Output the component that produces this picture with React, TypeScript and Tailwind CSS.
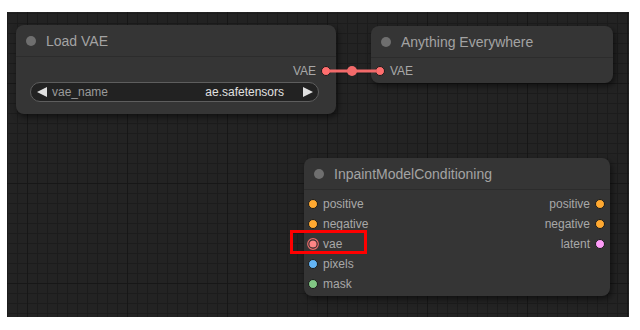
import React from "react";

const Dot = ({ color }: { color: string }) => (
  <span
    className="inline-block w-[10px] h-[10px] rounded-full border border-[#1b1b1b] shrink-0"
    style={{ backgroundColor: color }}
  />
);

const RingDot = () => (
  <svg width="12" height="12" viewBox="0 0 12 12" className="shrink-0">
    <circle cx="6" cy="6" r="5.3" fill="#2a2a2a" stroke="#e86a6a" strokeWidth="1.2" />
    <circle cx="6" cy="6" r="3.6" fill="#ff8585" />
  </svg>
);

const Title = ({ text }: { text: string }) => (
  <div className="h-[32px] flex items-center pl-[10px] gap-[10px] border-b border-[#2c2c2c]">
    <span className="w-[10px] h-[10px] rounded-full bg-[#6f6f6f]" />
    <span className="text-[14px] text-[#a3a3a3] leading-none">{text}</span>
  </div>
);

const InRow = ({ label, color, ring }: { label: string; color: string; ring?: boolean }) => (
  <div className="h-[20px] flex items-center gap-[4px] pl-[3px] text-[12px] text-[#a8a8a8]">
    <span className="w-[12px] flex justify-center">{ring ? <RingDot /> : <Dot color={color} />}</span>
    <span>{label}</span>
  </div>
);

const OutRow = ({ label, color }: { label: string; color: string }) => (
  <div className="h-[20px] flex items-center justify-end gap-[4px] pr-[4px] text-[12px] text-[#a8a8a8]">
    <span>{label}</span>
    <span className="w-[12px] flex justify-center">
      <Dot color={color} />
    </span>
  </div>
);

export default function App() {
  return (
    <div className="w-[640px] h-[330px] bg-white pl-[7px] pt-[12px] font-['Liberation_Sans',Arial,sans-serif]">
      <div
        className="relative w-[622px] h-[305px] overflow-hidden bg-[#232323]
        bg-[linear-gradient(to_right,#171717_1px,transparent_1px),linear-gradient(to_bottom,#171717_1px,transparent_1px),linear-gradient(to_right,#1c1c1c_1px,transparent_1px),linear-gradient(to_bottom,#1c1c1c_1px,transparent_1px)]
        bg-[size:100px_100px,100px_100px,10px_10px,10px_10px]
        bg-[position:20px_71px,20px_71px,0px_1px,0px_1px]"
      >
        {/* Load VAE */}
        <div className="absolute left-[9px] top-[13px] w-[320px] h-[89px] rounded-[8px] bg-[#353535] shadow-[2px_3px_6px_rgba(0,0,0,0.55)]">
          <Title text="Load VAE" />
          <div className="pt-[4px]">
            <OutRow label="VAE" color="#ff6e6e" />
            <div className="ml-[14px] mr-[17px] mt-[1px] h-[20px] rounded-full bg-[#222222] border border-[#5e5e5e] flex items-center pl-[6px] pr-[5px] text-[12px]">
              <svg width="10" height="10" viewBox="0 0 10 10" className="shrink-0">
                <path d="M0 5 L10 0 L10 10 Z" fill="#e0e0e0" />
              </svg>
              <span className="ml-[5px] text-[#9a9a9a]">vae_name</span>
              <span className="ml-auto text-[#e0e0e0]">ae.safetensors</span>
              <svg width="10" height="10" viewBox="0 0 10 10" className="shrink-0 ml-[19px]">
                <path d="M10 5 L0 0 L0 10 Z" fill="#e0e0e0" />
              </svg>
            </div>
          </div>
        </div>

        {/* Anything Everywhere */}
        <div className="absolute left-[364px] top-[14px] w-[242px] h-[57px] rounded-[8px] bg-[#353535] shadow-[2px_3px_6px_rgba(0,0,0,0.55)]">
          <Title text="Anything Everywhere" />
          <div className="pt-[3px]">
            <InRow label="VAE" color="#ff6e6e" />
          </div>
        </div>

        {/* link */}
        <svg className="absolute left-0 top-0 pointer-events-none" width="622" height="305">
          <line x1="322" y1="59" x2="369" y2="59" stroke="#f26a6a" strokeWidth="3" />
          <circle cx="345" cy="59" r="5" fill="#f26a6a" />
        </svg>

        {/* InpaintModelConditioning */}
        <div className="absolute left-[297px] top-[146px] w-[306px] h-[138px] rounded-[8px] bg-[#353535] shadow-[2px_3px_6px_rgba(0,0,0,0.55)]">
          <Title text="InpaintModelConditioning" />
          <div className="pt-[4px] flex">
            <div className="flex-1">
              <InRow label="positive" color="#ffa931" />
              <InRow label="negative" color="#ffa931" />
              <InRow label="vae" color="#ff6e6e" ring />
              <InRow label="pixels" color="#64b5f6" />
              <InRow label="mask" color="#81c784" />
            </div>
            <div className="flex-1">
              <OutRow label="positive" color="#ffa931" />
              <OutRow label="negative" color="#ffa931" />
              <OutRow label="latent" color="#ff9cf9" />
            </div>
          </div>
        </div>

        {/* highlight box */}
        <div className="absolute left-[283px] top-[218px] w-[77px] h-[24px] border-[3px] border-[#ff0000]" />
      </div>
    </div>
  );
}
